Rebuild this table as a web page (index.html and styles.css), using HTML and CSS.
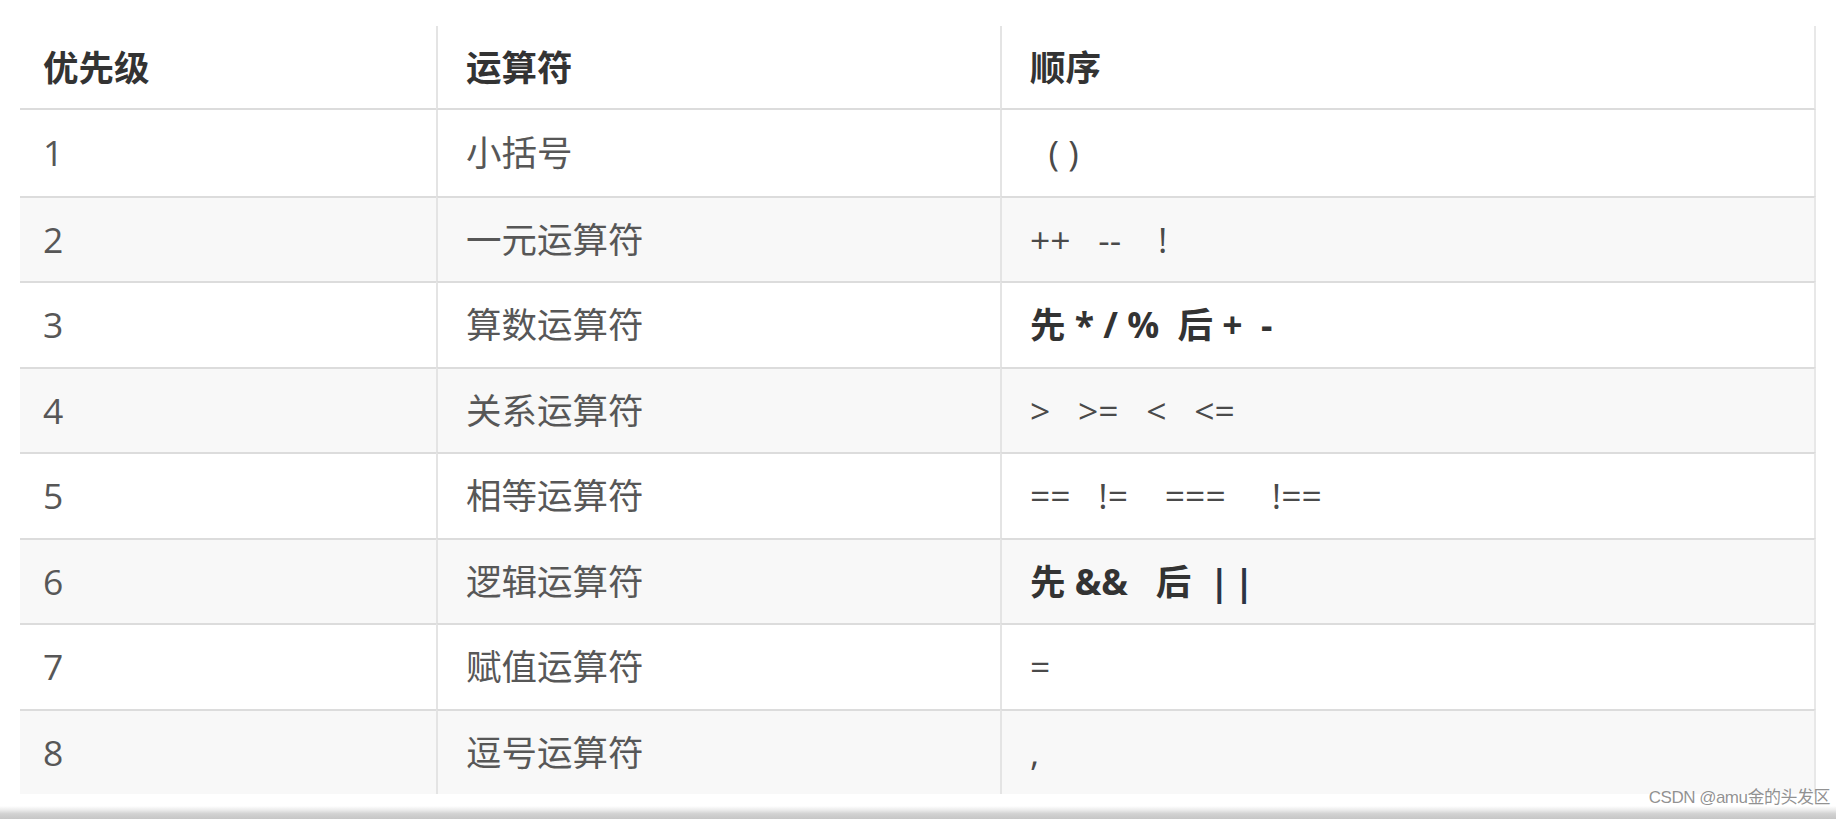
FILE: index.html
```html
<!DOCTYPE html>
<html lang="zh-CN">
<head>
<meta charset="utf-8">
<title>运算符优先级</title>
<link rel="stylesheet" href="styles.css">
</head>
<body>
<table class="prio">
  <colgroup>
    <col class="c1"><col class="c2"><col class="c3">
  </colgroup>
  <thead>
    <tr><th>优先级</th><th>运算符</th><th>顺序</th></tr>
  </thead>
  <tbody>
    <tr><td>1</td><td>小括号</td><td class="ops">  ( )</td></tr>
    <tr class="alt"><td>2</td><td>一元运算符</td><td class="ops">++   --    !</td></tr>
    <tr><td>3</td><td>算数运算符</td><td class="ops strong">先 * / %  后 +  -</td></tr>
    <tr class="alt"><td>4</td><td>关系运算符</td><td class="ops">&gt;   &gt;=   &lt;   &lt;=</td></tr>
    <tr><td>5</td><td>相等运算符</td><td class="ops">==   !=    ===     !==</td></tr>
    <tr class="alt"><td>6</td><td>逻辑运算符</td><td class="ops strong">先 &amp;&amp;   后  <span class="pipe">||</span></td></tr>
    <tr><td>7</td><td>赋值运算符</td><td class="ops">=</td></tr>
    <tr class="alt"><td>8</td><td>逗号运算符</td><td class="ops">,</td></tr>
  </tbody>
</table>
<div class="bar"></div>
<div class="mark">CSDN @amu金的头发区</div>
</body>
</html>
```

FILE: styles.css
```css
html, body {
  margin: 0;
  padding: 0;
  background: #fff;
}

body {
  width: 1836px;
  height: 819px;
  overflow: hidden;
  position: relative;
  display: flex;
  flex-direction: column;
  font-family: "Open Sans", "Noto Sans CJK SC", sans-serif;
}

.prio {
  border-collapse: separate;
  border-spacing: 0;
  table-layout: fixed;
  width: 1796px;
  margin: 26px 0 0 20px;
  font-size: 35.5px;
  line-height: 1.2;
}

.c1 { width: 416px; }
.c2 { width: 564px; }
.c3 { width: 816px; }

.prio thead tr { height: 84px; }
.prio tbody tr { height: 85.5px; }

.prio th,
.prio td {
  padding: 0 0 0 28px;
  text-align: left;
  vertical-align: middle;
  white-space: pre;
}

.prio th {
  font-weight: 700;
  color: #333;
  border-bottom: 2px solid #dcdcdc;
}

.prio td {
  color: #575757;
}

.prio tbody tr + tr td {
  border-top: 2px solid #dcdcdc;
}

.prio th:first-child,
.prio td:first-child {
  padding-left: 23px;
}

.prio th + th,
.prio td + td {
  border-left: 2px solid #e4e4e4;
}

.prio th:last-child,
.prio td:last-child {
  border-right: 2px solid #e8e8e8;
}

.prio tr.alt td {
  background: #f8f8f8;
}

.prio td.ops {
  color: #4a4a4a;
}

.prio td.strong {
  font-weight: 700;
  color: #333;
}

.pipe {
  color: #2b3444;
  letter-spacing: 5px;
}

.bar {
  margin-top: auto;
  height: 13px;
  background: linear-gradient(#ffffff 0%, #ececec 30%, #d2d2d2 60%, #c6c6c6 100%);
}

.mark {
  position: absolute;
  right: 6px;
  bottom: 11px;
  font-size: 17px;
  color: rgba(110, 110, 110, 0.75);
  font-family: "Liberation Sans", "Noto Sans CJK SC", sans-serif;
  letter-spacing: -0.5px;
}
```
